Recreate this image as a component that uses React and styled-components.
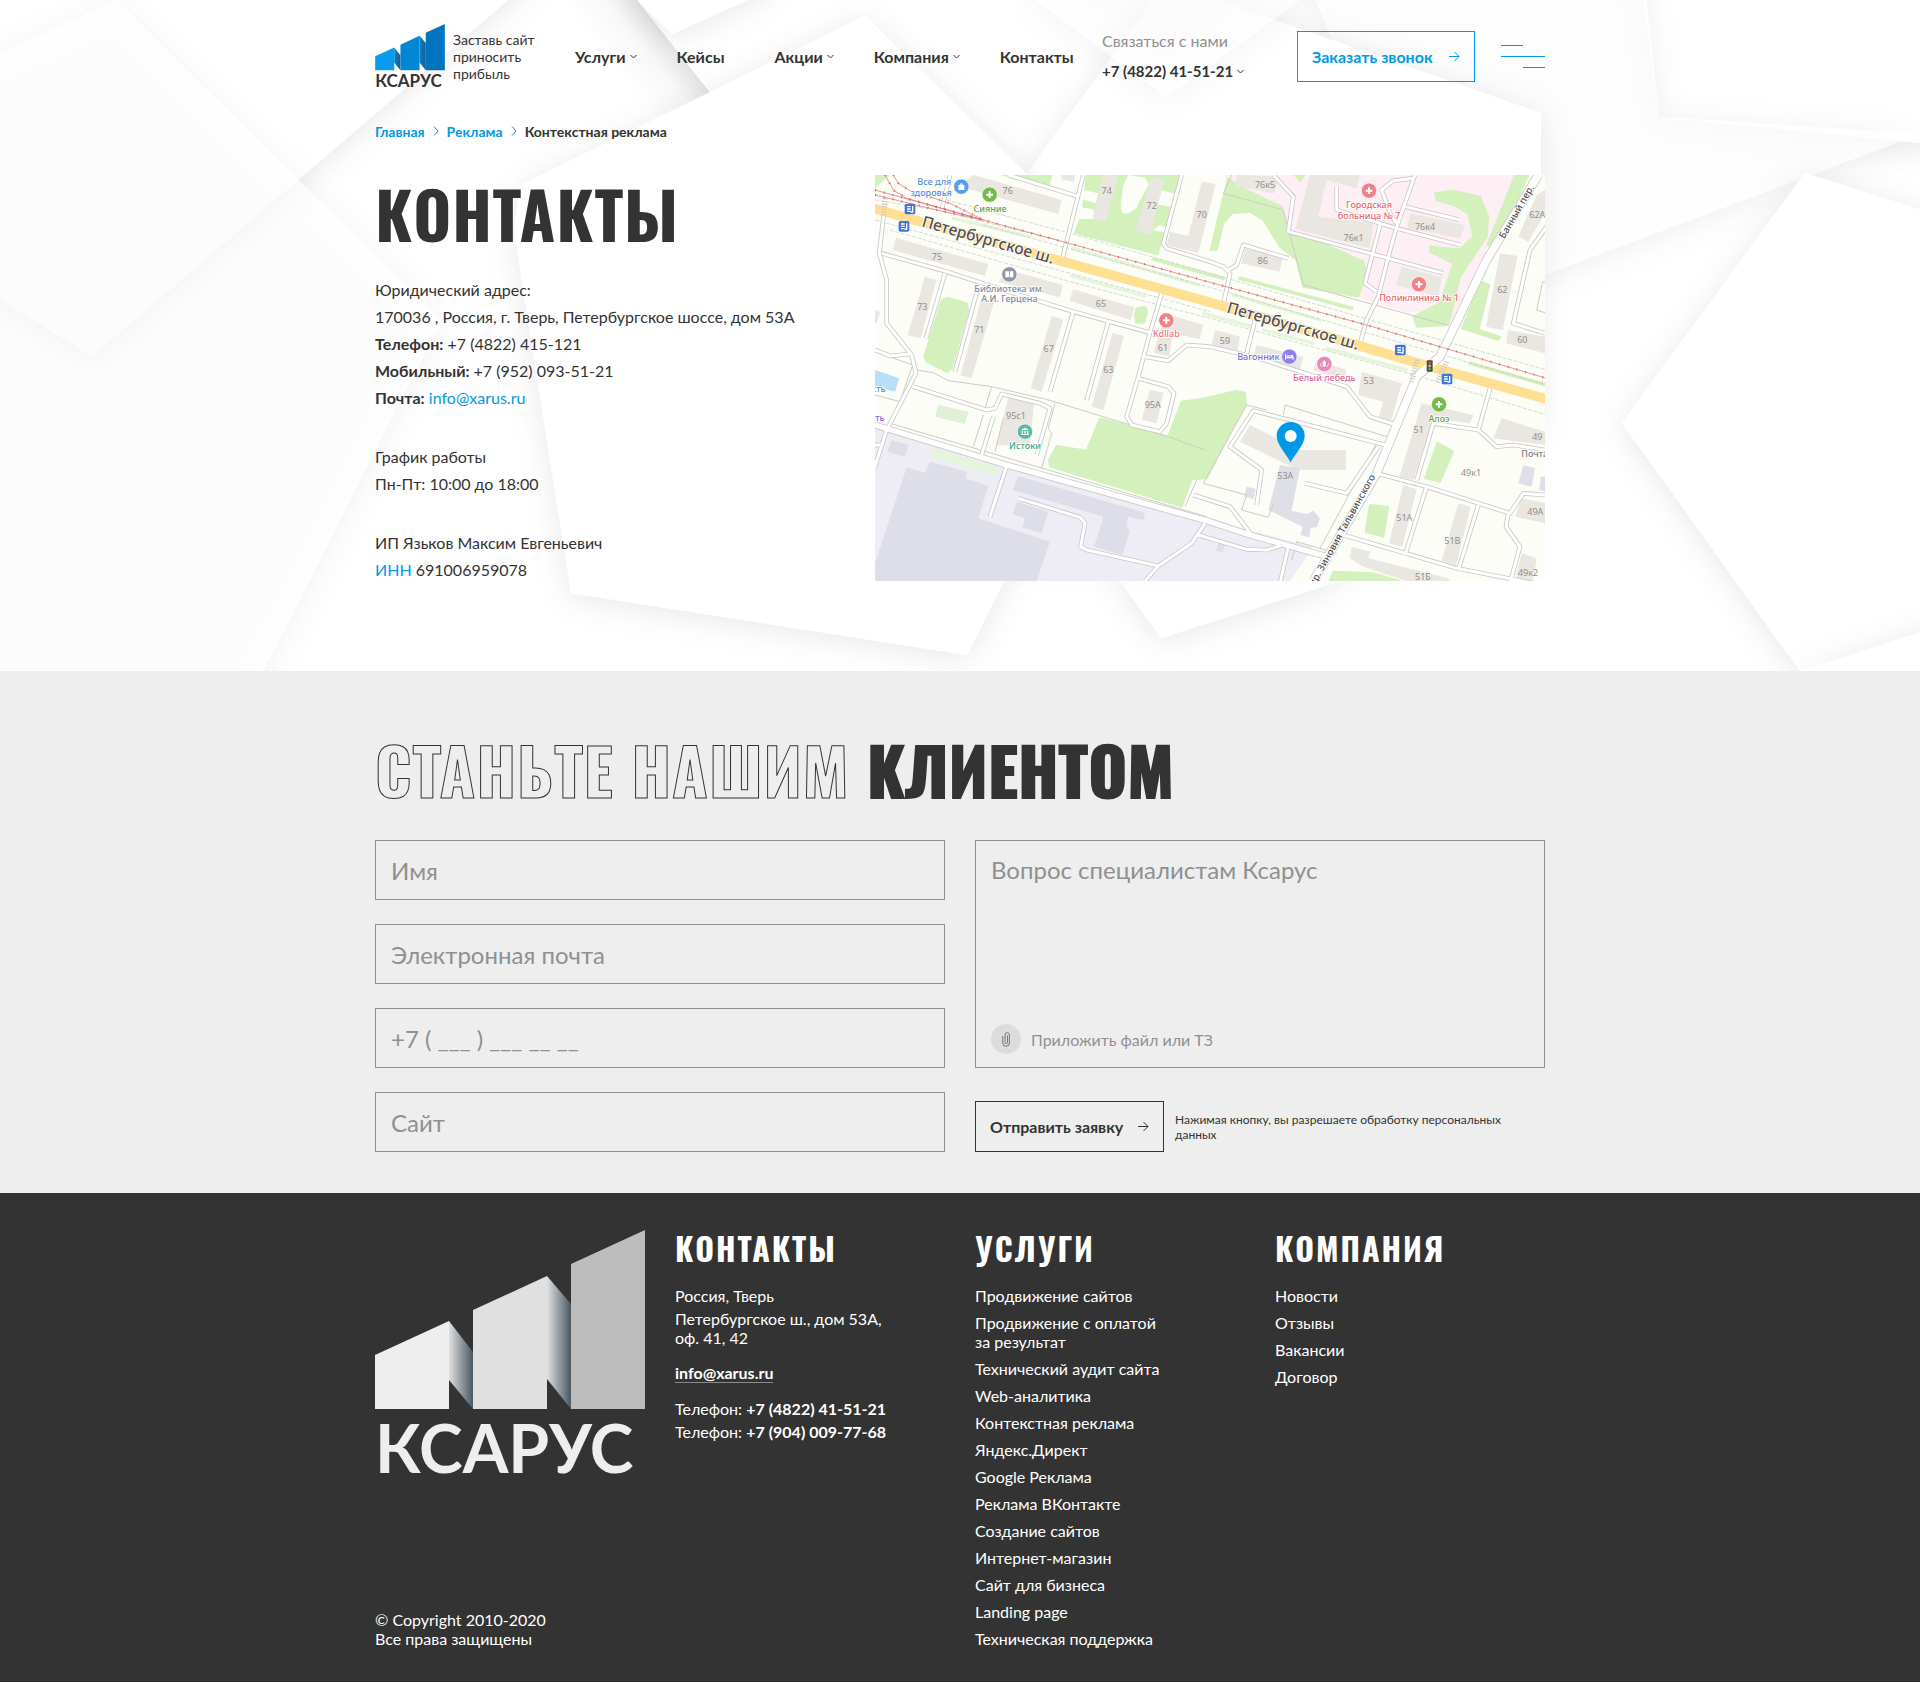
import React from "react";
import styled, { createGlobalStyle, css } from "styled-components";

const blue = "#0099e5";
const dark = "#333333";
const grey = "#909090";
const sans = `"Proxima Nova", Lato, "Open Sans", sans-serif`;
const display = `Oswald, "Liberation Sans Narrow", "Roboto Condensed", "Liberation Sans", sans-serif`;

const GlobalStyle = createGlobalStyle`
  *, *::before, *::after { box-sizing: border-box; }
  body { margin: 0; background: #fff; color: ${dark}; font: 400 16px/19px ${sans}; }
  h1, h2, h3, p, ul, ol { margin: 0; padding: 0; }
  ul, ol { list-style: none; }
  a { color: inherit; text-decoration: none; }
  button, input, textarea { font-family: inherit; border-radius: 0; }
`;

const Container = styled.div`
  width: 100%;
  max-width: 1200px;
  margin: 0 auto;
  padding: 0 15px;
`;

/* ---------- hero ---------- */

const Hero = styled.section`
  position: relative;
  overflow: hidden;
  padding-bottom: 88px;
`;

const Backdrop = styled.svg`
  position: absolute;
  inset: 0;
  width: 100%;
  height: 100%;
`;

const HeroContent = styled(Container)`
  position: relative;
`;

const Header = styled.header`
  display: flex;
  align-items: center;
  height: 112px;
`;

const Brand = styled.a`
  display: flex;
  align-items: center;
  gap: 8px;
  width: 200px;
`;

const BrandLogo = styled.svg`
  width: 70px;
  height: 64px;
  flex: none;
`;

const Slogan = styled.span`
  width: 92px;
  font-size: 14px;
  line-height: 17px;
`;

const Nav = styled.nav`
  display: flex;
  gap: 40px;
  width: 527px;
`;

const NavLink = styled.a`
  display: flex;
  align-items: center;
  gap: 4px;
  min-width: 58px;
  font-weight: 700;
  font-size: 16px;
`;

const Phone = styled.div`
  display: flex;
  flex-direction: column;
  gap: 12px;
  width: 195px;
`;

const PhoneHint = styled.span`
  color: ${grey};
`;

const PhoneLink = styled(NavLink)`
  font-size: 15px;
`;

const buttonBase = css`
  display: inline-flex;
  align-items: center;
  justify-content: space-between;
  gap: 8px;
  height: 51px;
  padding: 0 14px;
  background: transparent;
  border: 1px solid currentColor;
  font-weight: 700;
  font-size: 16px;
  cursor: pointer;
  white-space: nowrap;
`;

const CallButton = styled.button`
  ${buttonBase}
  width: 178px;
  color: ${blue};
`;

const Burger = styled.button`
  display: flex;
  flex-direction: column;
  gap: 10px;
  width: 44px;
  margin-left: auto;
  padding: 0;
  border: 0;
  background: none;
  cursor: pointer;
`;

const BurgerLine = styled.span`
  height: 1px;
  width: ${(p) => (p.$half ? "50%" : "100%")};
  align-self: ${(p) => p.$side || "flex-start"};
  background: ${blue};
`;

const Crumbs = styled.ol`
  display: flex;
  align-items: center;
  gap: 8px;
  height: 38px;
  font-size: 14px;
  font-weight: 700;
`;

const Crumb = styled.li`
  display: flex;
  align-items: center;
  gap: 8px;
  color: ${(p) => (p.$current ? dark : blue)};
`;

const ContactGrid = styled.div`
  display: grid;
  grid-template-columns: 1fr 670px;
  gap: 20px;
  padding-top: 25px;
`;

const PageTitle = styled.h1`
  font: 700 65px/76px ${display};
  letter-spacing: 1px;
  text-transform: uppercase;
`;

const Info = styled.div`
  display: flex;
  flex-direction: column;
  gap: 32px;
  padding-top: 25px;
  line-height: 27px;
`;

const AccentLink = styled.a`
  color: ${blue};
`;

const MapSvg = styled.svg`
  display: block;
  width: 100%;
  height: 406px;
`;

/* ---------- form ---------- */

const FormSection = styled.section`
  background: #eeeeee;
  padding: 56px 0 41px;
`;

const FormTitle = styled.h2`
  font: 700 65px/84px ${display};
  letter-spacing: 1px;
  text-transform: uppercase;
  -webkit-text-stroke: 2px ${dark};
`;

const Outline = styled.span`
  color: #eeeeee;
  -webkit-text-stroke: 1px ${dark};
`;

const Form = styled.form`
  display: grid;
  grid-template-columns: 1fr 1fr;
  gap: 30px;
  padding-top: 29px;
`;

const Fields = styled.div`
  display: flex;
  flex-direction: column;
  gap: 24px;
`;

const HiddenLabel = styled.label`
  position: absolute;
  width: 1px;
  height: 1px;
  overflow: hidden;
  clip-path: inset(50%);
`;

const placeholder = css`
  font-size: 24px;
  line-height: 30px;
  color: ${dark};
  background: transparent;
  outline: 0;
  &::placeholder { color: ${grey}; opacity: 1; }
`;

const Input = styled.input`
  ${placeholder}
  display: block;
  width: 100%;
  height: 60px;
  padding: 0 15px;
  border: 1px solid ${grey};
`;

const QuestionBox = styled.div`
  display: flex;
  flex-direction: column;
  height: 228px;
  padding: 14px 15px 13px;
  border: 1px solid ${grey};
`;

const Question = styled.textarea`
  ${placeholder}
  flex: 1;
  width: 100%;
  padding: 0;
  border: 0;
  resize: none;
`;

const Attach = styled.label`
  display: flex;
  align-items: center;
  gap: 10px;
  color: ${grey};
  cursor: pointer;
`;

const FileInput = styled.input`
  position: absolute;
  width: 1px;
  height: 1px;
  opacity: 0;
`;

const Clip = styled.span`
  display: flex;
  align-items: center;
  justify-content: center;
  width: 30px;
  height: 30px;
  border-radius: 50%;
  background: #dcdcdc;
`;

const SubmitRow = styled.div`
  display: flex;
  align-items: center;
  gap: 11px;
  padding-top: 9px;
`;

const SubmitButton = styled.button`
  ${buttonBase}
  width: 189px;
  flex: none;
  color: ${dark};
`;

const Consent = styled.p`
  max-width: 340px;
  font-size: 12px;
  line-height: 15px;
`;

/* ---------- footer ---------- */

const Footer = styled.footer`
  background: ${dark};
  color: #fff;
  padding: 37px 0 34px;
`;

const FooterGrid = styled(Container)`
  display: grid;
  grid-template-columns: repeat(4, 1fr);
  gap: 30px;
`;

const FooterBrand = styled.div`
  display: flex;
  flex-direction: column;
  justify-content: space-between;
`;

const FooterLogo = styled.svg`
  width: 100%;
`;

const FooterTitle = styled.h3`
  padding-bottom: 20px;
  font: 700 32px/36px ${display};
  letter-spacing: 2px;
  text-transform: uppercase;
`;

const LinkList = styled.ul`
  display: flex;
  flex-direction: column;
  gap: 8px;
`;

const Stack = styled.div`
  display: flex;
  flex-direction: column;
  gap: 16px;
`;

const Lines = styled.div`
  display: flex;
  flex-direction: column;
  gap: 4px;
`;

const MailLink = styled.a`
  align-self: flex-start;
  font-weight: 700;
  border-bottom: 1px solid #8a8a8a;
`;

/* ---------- icons ---------- */

const Caret = () => (
  <svg width="7" height="5" viewBox="0 0 7 5" fill="none" stroke={dark} aria-hidden="true">
    <path d="M.5 1l3 3 3-3" />
  </svg>
);

const Separator = () => (
  <svg width="6" height="10" viewBox="0 0 6 10" fill="none" stroke={blue} aria-hidden="true">
    <path d="M1 .5L5 5 1 9.5" />
  </svg>
);

const Arrow = () => (
  <svg width="11" height="11" viewBox="0 0 11 11" fill="none" stroke="currentColor" aria-hidden="true">
    <path d="M0 5.5h10M5.500 1L10 5.500 5.500 10" />
  </svg>
);

const ClipIcon = () => (
  <svg width="9" height="17" viewBox="0 0 9 17" fill="none" stroke="#777" aria-hidden="true">
    <path d="M5.5 4.500v7a1.200 1.200 0 0 1-2.400 0V3.800a2.100 2.100 0 0 1 4.300 0v8.200a3.300 3.300 0 0 1-6.600 0V5" />
  </svg>
);

const LogoArt = ({ id, bars, shade, text }) => (
  <>
    <defs>
      <linearGradient id={id}>
        <stop offset="0" stopColor={bars[1]} />
        <stop offset="1" stopColor={shade} />
      </linearGradient>
    </defs>
    <path fill={bars[0]} d="M0 125L74 91v88H0z" />
    <path fill={`url(#${id})`} d="M74 91l24 31v57l-24-29z" />
    <path fill={bars[1]} d="M98 80l74-34v133H98z" />
    <path fill={`url(#${id})`} d="M172 46l24 28v105l-24-30z" />
    <path fill={bars[2]} d="M196 34l74-34v179h-74z" />
    <text x="0" y="243" fill={text} fontFamily={sans} fontWeight="700" fontSize="66">КСАРУС</text>
  </>
);

/* ---------- paper backdrop ---------- */

const sheets = [
  ["-60,-60 578,-60 92,356 -60,262", 1],
  ["-60,90 0,54 116,0 441,321 263,671 240,730 -60,730", 0.6],
  ["1635,-60 1659,117 1990,150 1990,-60", 1],
  ["1290,-60 1640,-60 1659,117 1920,134 1541,276 1400,200", 0.7],
  ["1805,173 1990,232 1990,610 1800,671 1622,423", 1],
  ["1800,671 1990,610 1990,760", 1],
  ["1120,581 1161,638 1341,581 1300,500 1150,500", 1],
  ["637,-20 637,0 672,34 770,-10 770,-60", 1],
  ["1188,-10 1541,113 1541,420 1400,560 1026,560 1026,175 1160,-10", 1],
  ["1035,0 1167,97 1300,0 1290,-60 1035,-60", 0.5],
];

const PaperBackdrop = () => (
  <Backdrop viewBox="0 0 1920 671" preserveAspectRatio="xMidYMin slice" aria-hidden="true">
    <defs>
      <filter id="paper" x="-30%" y="-30%" width="160%" height="160%">
        <feDropShadow dx="0" dy="4" stdDeviation="15" floodColor="#000" floodOpacity=".09" />
      </filter>
      <linearGradient id="fold" gradientUnits="userSpaceOnUse" x1="627" y1="84" x2="674" y2="47">
        <stop offset="0" stopColor="#000" stopOpacity="0" />
        <stop offset=".6" stopColor="#000" stopOpacity=".03" />
        <stop offset="1" stopColor="#000" stopOpacity=".11" />
      </linearGradient>
    </defs>
    <rect width="1920" height="671" fill="#fff" />
    {sheets.map(([points, opacity]) => (
      <polygon key={points} points={points} fill="#fff" fillOpacity={opacity} filter="url(#paper)" />
    ))}
    <polygon points="540,0 637,0 711,94 521,185 420,75" fill="url(#fold)" />
    <polygon points="865,16 1026,173 1100,400 1004,581 967,655 571,593 514,230 521,185" fill="#fff" filter="url(#paper)" />
  </Backdrop>
);

/* ---------- city map ---------- */

const east = "translate(990 0)";

const parksWest = [
  "15,15 55,15 15,50",
  "400,15 545,15 535,45",
  "650,15 935,15 862,253 615,188 630,150 690,150 670,115 640,110",
  "215,390 235,383 290,400 295,420 245,595 232,606 170,575 163,560",
  "800,415 825,410 832,425 822,458 798,458 795,435",
  "690,745 895,800 935,695 1000,686 1100,662 1125,668 1128,705 1085,780 1010,925 965,928 935,1010 540,890 537,870 560,828 650,842",
];
const parksEast = [
  "85,25 120,50 200,90 245,110 265,190 380,225 490,275 500,310 475,380 310,350 290,270 240,230 190,150 150,125 95,130 70,160 50,240 32,240 60,120",
  "705,70 760,62 840,80 865,140 860,200 780,320 745,465 650,470 640,440 720,400 760,280 690,245 690,230 780,238 820,200 805,130 760,105 710,90",
  "945,15 985,15 890,230 862,225",
  "845,335 868,345 835,480 900,500 895,510 785,475",
  "712,818 760,845 720,935 675,925",
  "510,1005 565,1010 550,1100 497,1085",
  "400,1205 520,1210 600,1233 390,1233",
  "285,15 312,15 300,35",
];
const housesWest = [
  "310,15 575,90 565,132 270,50", "575,15 615,15 612,35 575,28",
  "700,15 745,15 708,155 668,145", "845,22 882,30 842,195 798,180",
  "995,35 1037,42 985,250 890,225 900,185 955,198",
  "78,204 355,282 345,318 68,240", "415,300 578,345 570,382 385,335",
  "610,358 793,412 782,450 598,392", "165,320 200,330 152,505 113,495",
  "335,380 372,395 305,625 272,615", "545,438 580,448 515,665 482,655",
  "728,488 762,498 700,720 665,710",
  "900,435 1000,465 988,508 908,490 898,560 852,548 868,480",
  "840,660 880,668 860,760 815,750", "415,682 492,700 480,830 378,825",
  "15,420 30,425 20,460 15,458",
];
const housesEast = [
  "110,15 240,20 222,70 105,48",
  "330,15 480,15 470,55 380,30 355,140 520,160 510,235 287,178",
  "135,235 248,262 238,305 123,280", "630,130 795,165 780,205 622,175",
  "605,290 725,322 715,380 588,345", "1010,75 1035,60 1035,130 985,215 955,200",
  "900,250 953,258 908,480 858,470", "925,480 1035,500 1035,550 918,520",
  "45,480 120,500 112,545 35,525", "170,525 310,560 300,600 160,560",
  "350,570 440,600 430,630 340,600", "485,605 605,640 570,765 532,755 550,695 475,675",
  "665,700 820,735 810,760 700,745 640,930 598,920", "905,745 1035,785 1035,825 880,805",
  "965,985 1035,1000 1035,1060 945,1040", "610,945 650,958 607,1130 567,1120",
  "775,1000 812,1010 768,1185 725,1172",
  "455,1130 510,1145 505,1165 745,1225 750,1233 620,1233 490,1190 450,1165",
  "965,1150 1010,1165 1000,1233 945,1233", "150,765 300,840 437,840 437,900 295,900 120,815",
];
const plantsWest = [
  "65,810 115,825 105,862 52,845",
  "110,892 165,908 180,875 290,905 288,925 355,948 325,1045 540,1115 500,1233 15,1233 15,1180",
  "445,918 825,1028 820,1050 775,1040 770,1070 780,1080 758,1155 672,1130 695,1060 700,1040 428,960",
  "440,995 535,1025 515,1090 458,1072 465,1045 428,1033",
];
const plantsEast = [
  "240,885 300,895 275,1022 320,1032 340,1022 360,1045 352,1070 332,1075 328,1102 302,1095 308,1070 270,1052 205,1020",
  "140,950 167,957 160,988 133,978", "970,885 1005,895 995,950 955,940",
  "1022,920 1035,920 1035,965 1018,960", "55,1120 75,1125 68,1148 48,1142",
];
const roadsWest = [
  "640,15 578,262", "240,15 215,120", "415,15 620,78",
  "45,100 28,250 50,330 50,460 125,555 138,610 50,780 15,890",
  "35,250 230,305 400,360 610,425 840,488", "225,310 168,505", "325,350 255,605",
  "610,425 540,665", "715,455 650,690",
  "875,370 840,488 805,620 770,740 785,765 870,785 890,760 912,670 895,650 805,625",
  "825,560 895,572 950,525 1020,530 1150,560 1430,650 1500,740 1580,765",
  "15,540 60,558 120,552", "130,650 350,720 375,715 395,672 510,700 540,715 500,855",
  "370,740 335,855", "410,888 360,1040",
  "445,985 630,1042 645,1060 632,1130 650,1140 865,1188 965,1120 1005,1060",
  "825,1233 865,1188", "935,15 880,220 890,235 1020,275 1060,290 1080,310 1062,395",
  "985,1095 1130,1138 1190,1140 1240,1125", "15,825 40,825",
];
const roadsEast = [
  "265,265 130,225 110,285 85,300", "165,450 140,550",
  "645,15 590,170 565,260 535,380 500,450 480,520",
  "410,50 410,120 540,160 590,175 780,225", "220,15 280,80 265,185 510,250 730,310",
  "540,165 495,340 530,365", "615,110 780,150", "640,25 580,32 545,60 570,130 590,160",
  "870,655 835,780 700,760 650,930", "835,780 890,830 940,825 1035,840",
  "530,910 680,950 930,1030 970,970 1035,975", "680,950 615,1155",
  "430,1095 770,1195 1000,1240", "835,1005 775,1200", "925,1030 918,1070 960,1130 930,1240",
  "1040,170 990,240 940,460 1035,490", "555,825 160,722 90,830 185,900 170,1005",
  "535,830 440,970 315,940", "-20,975 90,1010 155,1095", "265,1130 240,1240",
];
const paths = [
  "140,600 190,608 235,632 365,650 530,688", "365,650 345,715", "530,688 895,800 1005,840",
  "15,545 128,585 90,695 15,675", "555,700 535,775 545,790 515,895",
  "340,735 310,830", "400,745 375,845", "60,760 1010,1040", "1060,70 1240,120 1300,345 1730,465",
  "1060,70 1085,15", "1000,940 1130,705 1190,720", "1240,735 1245,705 1550,800",
  "1000,940 1130,975 1115,1020 1195,1042 1210,1000", "1350,1135 1520,820",
  "1265,1170 1280,1115 1400,1150", "980,930 945,1010", "2035,340 2018,335 2000,420 2030,430",
];
const streets = ["15,765 410,885 1020,1055 1140,1095 1390,1165"];
const avenue = "2005,15 1850,270 1710,560 1640,620 1580,765 1520,910 1420,1080 1330,1233";
const trams = ["15,60 340,150 590,218 1020,337 1490,465 2030,625", "15,75 200,120 340,150", "45,15 70,60 110,85 340,150", "70,15 85,40 120,62 240,100 340,150"];
const kerbs = [
  "230,90 600,190 1020,310 1500,450 2030,600", "60,180 600,335 1020,445 1650,620 2030,735",
  "340,165 1020,352 2030,645", "15,150 600,310 1020,425", "15,90 200,120 560,210",
];

const numbersWest = [
  [413, 72, "76"], [710, 72, "74"], [845, 117, "72"], [995, 143, "70"], [201, 270, "75"],
  [157, 419, "73"], [328, 490, "71"], [536, 545, "67"], [693, 412, "65"], [879, 542, "61"],
  [715, 608, "63"], [848, 713, "95А"], [438, 746, "95с1"],
];
const numbersEast = [
  [195, 54, "76к5"], [461, 212, "76к1"], [675, 180, "76к4"], [188, 283, "86"], [75, 521, "59"],
  [506, 642, "53"], [256, 926, "53А"], [656, 790, "51"], [813, 918, "49к1"], [613, 1054, "51А"],
  [757, 1122, "51В"], [669, 1230, "51Б"], [984, 1218, "49к2"], [1006, 1035, "49А"],
  [1012, 810, "49"], [967, 518, "60"], [907, 369, "62"], [1012, 143, "62А"],
];
const namesWest = [
  [193, 46, "Все для", "#4f93dd"], [183, 78, "здоровья", "#4f93dd"], [360, 125, "Сияние", "#5fa544"],
  [418, 365, "Библиотека им.", "#838a99"], [418, 397, "А.И. Герцена", "#838a99"],
  [889, 501, "Kdllab", "#ee7479"], [465, 836, "Истоки", "#45a58c"], [26, 666, "сть", "#4f93dd"], [30, 752, "ть", "#7d68d8"],
];
const namesEast = [
  [507, 114, "Городская", "#e4686f"], [507, 146, "больница № 7", "#e4686f"],
  [657, 394, "Поликлиника № 1", "#e4686f"], [175, 571, "Вагонник", "#7d68d8"],
  [373, 633, "Белый лебедь", "#d9669f"], [717, 756, "Алоэ", "#5fa544"], [1004, 862, "Почта", "#7a7a80"],
];

const cross = "M-3-10h6v7h7v6h-7v7h-6v-7h-7v-6h7z";
const bag = "M-9-5H9V10H-9z M-5-5a5 5 0 0 1 10 0h-3a2 2 0 0 0-4 0z";
const poisWest = [
  [274, 50, "#569fe8", bag], [359, 74, "#78b94b", cross],
  [418, 313, "#8f96a5", "M-12-9H-1V9H-12z M1-9H12V9H1z"], [889, 451, "#f08289", cross],
  [465, 785, "#5bb9a2", "M-12-5L0-12 12-5z M-10-3h4v9h-4z M-2-3h4v9h-4z M6-3h4v9H6z M-12 7h24v3h-24z"],
];
const poisEast = [
  [507, 62, "#f08289", cross], [657, 343, "#f08289", cross],
  [268, 560, "#8f80ec", "M-13-9h3V1h23V9h-3V5h-20v4h-3z M-8-4H1V0H-8z M3-5h7l3 5H3z"],
  [373, 582, "#e885ba", "M0-12C8-4 6 8 0 9-6 8-8-4 0-12z M-11-5C-12 3-9 8-5 10-13 10-14-1-11-5z M11-5C12 3 9 8 5 10 13 10 14-1 11-5z"],
  [717, 703, "#78b94b", cross],
];

const Shapes = ({ items, ...rest }) => (
  <g {...rest}>{items.map((points) => <polygon key={points} points={points} />)}</g>
);
const Routes = ({ items, ...rest }) => (
  <g fill="none" strokeLinejoin="round" {...rest}>
    {items.map((points) => <polyline key={points} points={points} />)}
  </g>
);
const Names = ({ items, ...rest }) => (
  <g {...rest}>
    {items.map(([x, y, label, fill]) => <text key={label + x} x={x} y={y} fill={fill}>{label}</text>)}
  </g>
);
const Pois = ({ items, ...rest }) => (
  <g {...rest}>
    {items.map(([x, y, fill, d]) => (
      <g key={x} transform={`translate(${x} ${y})`}>
        <circle r="23" fill={fill} stroke="#fff" strokeWidth="2" />
        <path d={d} fill="#fff" />
      </g>
    ))}
  </g>
);
const Stop = ({ x, y }) => (
  <g transform={`translate(${x} ${y})`}>
    <rect x="-16" y="-16" width="32" height="32" rx="5" fill="#3f76dd" />
    <path d="M-9-7H2M-9 0H2M-9 7H2M8-9V9H2" fill="none" stroke="#fff" strokeWidth="4" />
  </g>
);

const CityMap = () => (
  <MapSvg viewBox="15 15 2010 1218" preserveAspectRatio="xMidYMid slice" role="img" aria-label="Карта проезда">
    <rect x="15" y="15" width="2010" height="1218" fill="#fbfdf6" />
    <polygon fill="#eeedf5" points="15,775 60,785 410,892 1020,1050 1330,1130 1260,1233 15,1233" />
    <polygon fill="#feeff5" points="1065,15 1935,15 1850,240 1745,455 1640,425 1615,430 1460,380 1465,300 1240,200 1235,120 1070,70" />
    <polygon fill="#b9def7" points="15,600 88,625 75,665 15,650" />
    <Shapes items={parksWest} fill="#d4f1bd" strokeLinejoin="round" stroke="#d4f1bd" strokeWidth="6" />
    <Shapes items={parksEast} fill="#d4f1bd" strokeLinejoin="round" stroke="#d4f1bd" strokeWidth="6" transform={east} />
    <path fill="#fbfdf6" d="M775 15l50 8 12 20-28 50-10 22-22 14q-25 8-24-22l6-60z M640 60l45 10-8 30-45-14z M868 60l60 14-10 40-60-12z M868 165l22 8-10 14-30-6z" />
    <Routes items={["610,235 985,345", "605,318 825,378", "250,145 480,200", "1000,430 1145,470", "1090,375 1350,450", "1180,480 1330,520", "1370,535 1610,600"]} stroke="#e5f5d9" strokeWidth="10" strokeLinecap="round" />
    <Routes items={["195,850 370,902"]} stroke="#e5f5dc" strokeWidth="26" strokeLinecap="round" />
    <Routes items={["850,268 1060,325", "1110,325 1445,415", "1800,580 2030,645"]} stroke="#d4f1bd" strokeWidth="11" strokeLinecap="round" />
    <polygon points="205,705 295,725 285,762 195,740" fill="#e0efd8" />
    <Shapes items={housesWest} fill="#eae6e1" />
    <Shapes items={housesEast} fill="#eae6e1" transform={east} />
    <Shapes items={plantsWest} fill="#dddee8" />
    <Shapes items={plantsEast} fill="#dfdfe8" transform={east} />
    <Routes items={paths} stroke="#cfcbc7" strokeWidth="3" />
    <Routes items={kerbs} stroke="#c6c6c4" strokeWidth="2" strokeDasharray="12 5" />
    <Routes items={roadsWest} stroke="#cac8c8" strokeWidth="14" />
    <Routes items={roadsEast} stroke="#cac8c8" strokeWidth="14" transform={east} />
    <Routes items={streets} stroke="#cac8c8" strokeWidth="21" />
    <Routes items={[avenue]} stroke="#cac8c8" strokeWidth="28" />
    <Routes items={roadsWest} stroke="#fff" strokeWidth="9" />
    <Routes items={roadsEast} stroke="#fff" strokeWidth="9" transform={east} />
    <Routes items={streets} stroke="#fff" strokeWidth="16" />
    <Routes items={["0,112 150,155 555,268 1020,397 1460,525 1680,590 2040,690"]} stroke="#ffdf92" strokeWidth="29" />
    <Routes items={[avenue]} stroke="#fff" strokeWidth="23" />
    <Routes items={["1640,570 1625,635", "1730,575 1700,640", "45,85 40,140"]} stroke="#c9c9c9" strokeWidth="16" strokeDasharray="3 5" />
    <Routes items={trams} stroke="#d8686c" strokeWidth="2" />
    <Routes items={trams} stroke="#d8686c" strokeWidth="7" strokeDasharray="3 24" />
    <g fontFamily={`"Noto Sans", "Open Sans", sans-serif`} textAnchor="middle">
      <Names items={numbersWest} fontSize="27" style={{ fill: "#8f8f8c" }} />
      <Names items={numbersEast} fontSize="27" style={{ fill: "#8f8f8c" }} transform={east} />
      <g stroke="#fff" strokeWidth="5" strokeLinejoin="round" paintOrder="stroke" fontWeight="500">
        <Names items={namesWest} fontSize="27" />
        <Names items={namesEast} fontSize="27" transform={east} />
        <g fill="#515153" fontSize="47">
          <text transform="translate(350 225) rotate(16)">Петербургское ш.</text>
          <text transform="translate(1265 483) rotate(16)">Петербургское ш.</text>
        </g>
        <g fill="#515153" fontSize="29">
          <text transform="translate(1948 130) rotate(-60)">Банный пер.</text>
          <text transform="translate(1425 1085) rotate(-61)">пр. Зиновия Тальвинского</text>
        </g>
      </g>
    </g>
    <Pois items={poisWest} />
    <Pois items={poisEast} transform={east} />
    <Stop x={120} y={117} />
    <Stop x={102} y={169} />
    <Stop x={1591} y={540} />
    <Stop x={1731} y={627} />
    <rect x="1670" y="571" width="18" height="34" rx="3" fill="#4b4b4b" />
    <circle cx="1679" cy="579" r="4" fill="#e44" />
    <circle cx="1679" cy="588" r="4" fill="#dc4" />
    <circle cx="1679" cy="597" r="4" fill="#4b4" />
    <path fill={blue} fillRule="evenodd" d="M1262 877c-14-26-42-54-42-79a42 42 0 0 1 84 0c0 25-28 53-42 79z" />
    <circle cx="1262" cy="798" r="18" fill="#fff" />
  </MapSvg>
);

/* ---------- page ---------- */

const menu = [["Услуги", true], ["Кейсы"], ["Акции", true], ["Компания", true], ["Контакты"]];
const fields = [
  ["name", "text", "Имя", "Имя"],
  ["email", "email", "Электронная почта", "Электронная почта"],
  ["phone", "tel", "Телефон", "+7 ( ___ ) ___ __ __"],
  ["site", "text", "Сайт", "Сайт"],
];
const services = [
  "Продвижение сайтов", "Продвижение с оплатой\nза результат", "Технический аудит сайта", "Web-аналитика",
  "Контекстная реклама", "Яндекс.Директ", "Google Реклама", "Реклама ВКонтакте", "Создание сайтов",
  "Интернет-магазин", "Сайт для бизнеса", "Landing page", "Техническая поддержка",
];
const company = ["Новости", "Отзывы", "Вакансии", "Договор"];

const FooterLink = styled.a`
  display: block;
  white-space: pre-line;
`;

const FooterLinks = ({ title, items }) => (
  <nav aria-label={title}>
    <FooterTitle>{title}</FooterTitle>
    <LinkList>
      {items.map((item) => <li key={item}><FooterLink href="#">{item}</FooterLink></li>)}
    </LinkList>
  </nav>
);

export default function App() {
  return (
    <>
      <GlobalStyle />
      <Hero>
        <PaperBackdrop />
        <HeroContent>
          <Header>
            <Brand href="#">
              <BrandLogo viewBox="0 0 270 248">
                <LogoArt id="logo-blue" bars={["#0a9bea", "#0086d4", "#0074bd"]} shade="#24587e" text={dark} />
              </BrandLogo>
              <Slogan>Заставь сайт приносить прибыль</Slogan>
            </Brand>
            <Nav>
              {menu.map(([label, more]) => (
                <NavLink key={label} href="#">{label}{more && <Caret />}</NavLink>
              ))}
            </Nav>
            <Phone>
              <PhoneHint>Связаться с нами</PhoneHint>
              <PhoneLink href="tel:+74822415121">+7 (4822) 41-51-21<Caret /></PhoneLink>
            </Phone>
            <CallButton type="button">Заказать звонок<Arrow /></CallButton>
            <Burger type="button" aria-label="Меню">
              <BurgerLine $half />
              <BurgerLine />
              <BurgerLine $half $side="flex-end" />
            </Burger>
          </Header>
          <Crumbs>
            <Crumb><a href="#">Главная</a><Separator /></Crumb>
            <Crumb><a href="#">Реклама</a><Separator /></Crumb>
            <Crumb $current>Контекстная реклама</Crumb>
          </Crumbs>
          <ContactGrid>
            <div>
              <PageTitle>Контакты</PageTitle>
              <Info>
                <div>
                  <p>Юридический адрес:</p>
                  <p>170036 , Россия, г. Тверь, Петербургское шоссе, дом 53А</p>
                  <p><b>Телефон:</b> +7 (4822) 415-121</p>
                  <p><b>Мобильный: </b>+7 (952) 093-51-21</p>
                  <p><b>Почта:</b> <AccentLink href="mailto:info@xarus.ru">info@xarus.ru</AccentLink></p>
                </div>
                <div>
                  <p>График работы</p>
                  <p>Пн-Пт: 10:00 до 18:00</p>
                </div>
                <div>
                  <p>ИП Язьков Максим Евгеньевич</p>
                  <p><AccentLink href="#">ИНН</AccentLink> 691006959078</p>
                </div>
              </Info>
            </div>
            <CityMap />
          </ContactGrid>
        </HeroContent>
      </Hero>

      <FormSection>
        <Container>
          <FormTitle><Outline>Станьте нашим</Outline> клиентом</FormTitle>
          <Form>
            <Fields>
              {fields.map(([id, type, label, hint]) => (
                <div key={id}>
                  <HiddenLabel htmlFor={id}>{label}</HiddenLabel>
                  <Input id={id} type={type} placeholder={hint} />
                </div>
              ))}
            </Fields>
            <Fields>
              <QuestionBox>
                <HiddenLabel htmlFor="question">Вопрос специалистам Ксарус</HiddenLabel>
                <Question id="question" placeholder="Вопрос специалистам Ксарус" />
                <Attach htmlFor="file">
                  <FileInput id="file" type="file" />
                  <Clip><ClipIcon /></Clip>
                  Приложить файл или ТЗ
                </Attach>
              </QuestionBox>
              <SubmitRow>
                <SubmitButton type="button">Отправить заявку<Arrow /></SubmitButton>
                <Consent>Нажимая кнопку, вы разрешаете обработку персональных данных</Consent>
              </SubmitRow>
            </Fields>
          </Form>
        </Container>
      </FormSection>

      <Footer>
        <FooterGrid>
          <FooterBrand>
            <FooterLogo viewBox="0 0 270 248">
              <LogoArt id="logo-grey" bars={["#eeeeee", "#e0e0e0", "#bdbdbd"]} shade="#4a5862" text="#eeeeee" />
            </FooterLogo>
            <p>© Copyright 2010-2020<br />Все права защищены</p>
          </FooterBrand>
          <div>
            <FooterTitle>Контакты</FooterTitle>
            <Stack>
              <Lines>
                <p>Россия, Тверь</p>
                <p>Петербургское ш., дом 53А,<br />оф. 41, 42</p>
              </Lines>
              <MailLink href="mailto:info@xarus.ru">info@xarus.ru</MailLink>
              <Lines>
                <p>Телефон: <b>+7 (4822) 41-51-21</b></p>
                <p>Телефон: <b>+7 (904) 009-77-68</b></p>
              </Lines>
            </Stack>
          </div>
          <FooterLinks title="Услуги" items={services} />
          <FooterLinks title="Компания" items={company} />
        </FooterGrid>
      </Footer>
    </>
  );
}
